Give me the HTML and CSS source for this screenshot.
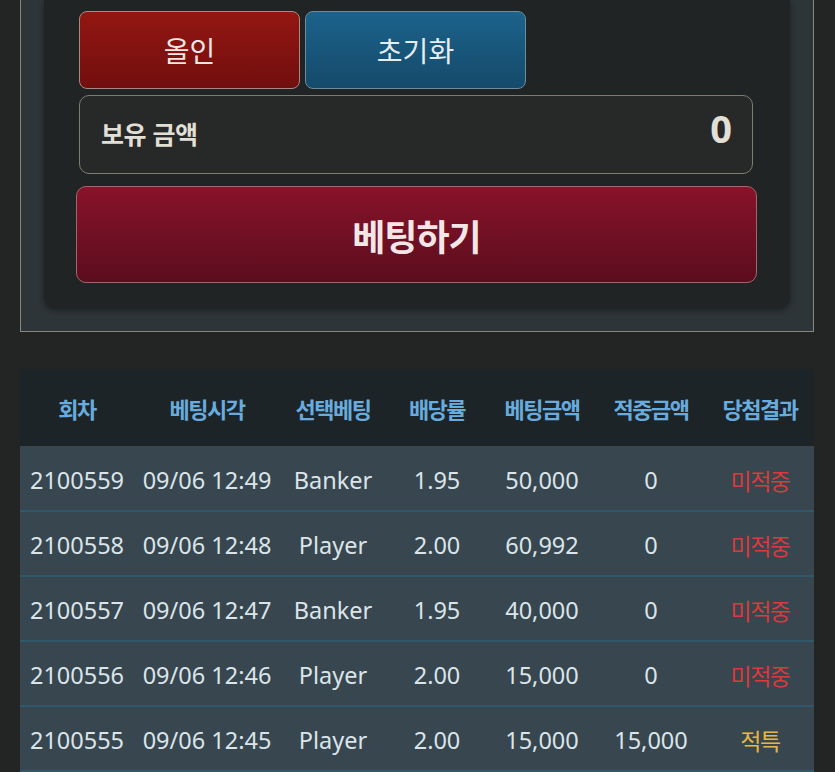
FILE: index.html
```html
<!DOCTYPE html>
<html lang="ko">
<head>
<meta charset="utf-8">
<title>베팅</title>
<link rel="stylesheet" href="styles.css">
</head>
<body>
<div class="panel">
  <div class="card">
    <div class="quick-row">
      <button class="qbtn qbtn-red">올인</button>
      <button class="qbtn qbtn-blue">초기화</button>
    </div>
    <div class="balance">
      <span class="balance-label">보유 금액</span>
      <span class="balance-value">0</span>
    </div>
    <button class="bet-btn">베팅하기</button>
  </div>
</div>

<table class="history">
  <colgroup>
    <col class="c1"><col class="c2"><col class="c3"><col class="c4"><col class="c5"><col class="c6"><col class="c7">
  </colgroup>
  <thead>
    <tr>
      <th>회차</th><th>베팅시각</th><th>선택베팅</th><th>배당률</th><th>베팅금액</th><th>적중금액</th><th>당첨결과</th>
    </tr>
  </thead>
  <tbody>
    <tr><td>2100559</td><td>09/06 12:49</td><td>Banker</td><td>1.95</td><td>50,000</td><td>0</td><td class="lose">미적중</td></tr>
    <tr><td>2100558</td><td>09/06 12:48</td><td>Player</td><td>2.00</td><td>60,992</td><td>0</td><td class="lose">미적중</td></tr>
    <tr><td>2100557</td><td>09/06 12:47</td><td>Banker</td><td>1.95</td><td>40,000</td><td>0</td><td class="lose">미적중</td></tr>
    <tr><td>2100556</td><td>09/06 12:46</td><td>Player</td><td>2.00</td><td>15,000</td><td>0</td><td class="lose">미적중</td></tr>
    <tr><td>2100555</td><td>09/06 12:45</td><td>Player</td><td>2.00</td><td>15,000</td><td>15,000</td><td class="special">적특</td></tr>
  </tbody>
</table>
</body>
</html>
```
FILE: styles.css
```css
html, body {
  margin: 0;
  padding: 0;
  background: #232525;
  font-family: "Noto Sans", "Noto Sans CJK KR", sans-serif;
  overflow: hidden;
}

.panel {
  margin-left: 20px;
  width: 794px;
  box-sizing: border-box;
  background: #2e3538;
  border: 1px solid #8a877b;
  border-top: none;
  padding: 0 23px 24px 23px;
}

.card {
  background: #202424;
  border-radius: 0 0 11px 11px;
  box-shadow: 0 3px 6px rgba(0, 0, 0, 0.45);
  padding: 11px 37px 24px 35px;
  display: flex;
  flex-direction: column;
}

.quick-row {
  display: flex;
  gap: 5px;
}

.qbtn {
  width: 221px;
  height: 78px;
  box-sizing: border-box;
  border-radius: 8px;
  font-family: "Noto Sans CJK KR", sans-serif;
  font-size: 28px;
  font-weight: 400;
  color: #f1e6e4;
  padding: 0;
  margin: 0;
}

.qbtn-red {
  background: linear-gradient(#931612, #710f0e);
  border: 1px solid #a88880;
}

.qbtn-blue {
  background: linear-gradient(#1c628b, #154a6a);
  border: 1px solid #6a8c9c;
  color: #e4eef2;
}

.balance {
  margin-top: 6px;
  height: 79px;
  box-sizing: border-box;
  background: #272828;
  border: 1px solid #7e7b70;
  border-radius: 10px;
  display: flex;
  align-items: center;
  justify-content: space-between;
  padding: 0 20px 4px 21px;
}

.balance-label {
  font-family: "Noto Sans CJK KR", sans-serif;
  font-weight: 700;
  font-size: 25px;
  letter-spacing: -0.5px;
  color: #e2dfd6;
}

.balance-value {
  font-family: "Noto Sans", sans-serif;
  font-weight: 700;
  font-size: 38px;
  color: #e2dfd6;
  margin-bottom: 9px;
}

.bet-btn {
  margin: 12px -4px 0 -3px;
  height: 97px;
  box-sizing: border-box;
  background: linear-gradient(#88132a, #5b0d1e);
  border: 1px solid #a4646e;
  border-radius: 10px;
  font-family: "Noto Sans CJK KR", sans-serif;
  font-size: 36px;
  font-weight: 700;
  letter-spacing: -1px;
  color: #f2e6e7;
  padding: 0;
}

.history {
  margin: 37px 0 0 20px;
  width: 794px;
  table-layout: fixed;
  border-collapse: collapse;
}

.c1 { width: 114px; }
.c2 { width: 146px; }
.c3 { width: 106px; }
.c4 { width: 102px; }
.c5 { width: 108px; }
.c6 { width: 110px; }
.c7 { width: 108px; }

.history th {
  background: #1d2427;
  height: 77px;
  padding: 0;
  font-family: "Noto Sans CJK KR", sans-serif;
  font-weight: 700;
  font-size: 22px;
  letter-spacing: -1.5px;
  color: #68acdf;
  text-align: center;
  vertical-align: middle;
}

.history td {
  background: #37464f;
  height: 65px;
  padding: 3px 0 0 0;
  box-sizing: border-box;
  border-bottom: 2px solid #30586a;
  font-size: 23.5px;
  color: #dbe4e9;
  text-align: center;
  vertical-align: middle;
  white-space: nowrap;
}

.history td.lose {
  font-family: "Noto Sans CJK KR", sans-serif;
  font-size: 23px;
  letter-spacing: -1.5px;
  color: #d93a3c;
}

.history td.special {
  font-family: "Noto Sans CJK KR", sans-serif;
  font-size: 23px;
  letter-spacing: -1.5px;
  color: #e6b642;
}
```
